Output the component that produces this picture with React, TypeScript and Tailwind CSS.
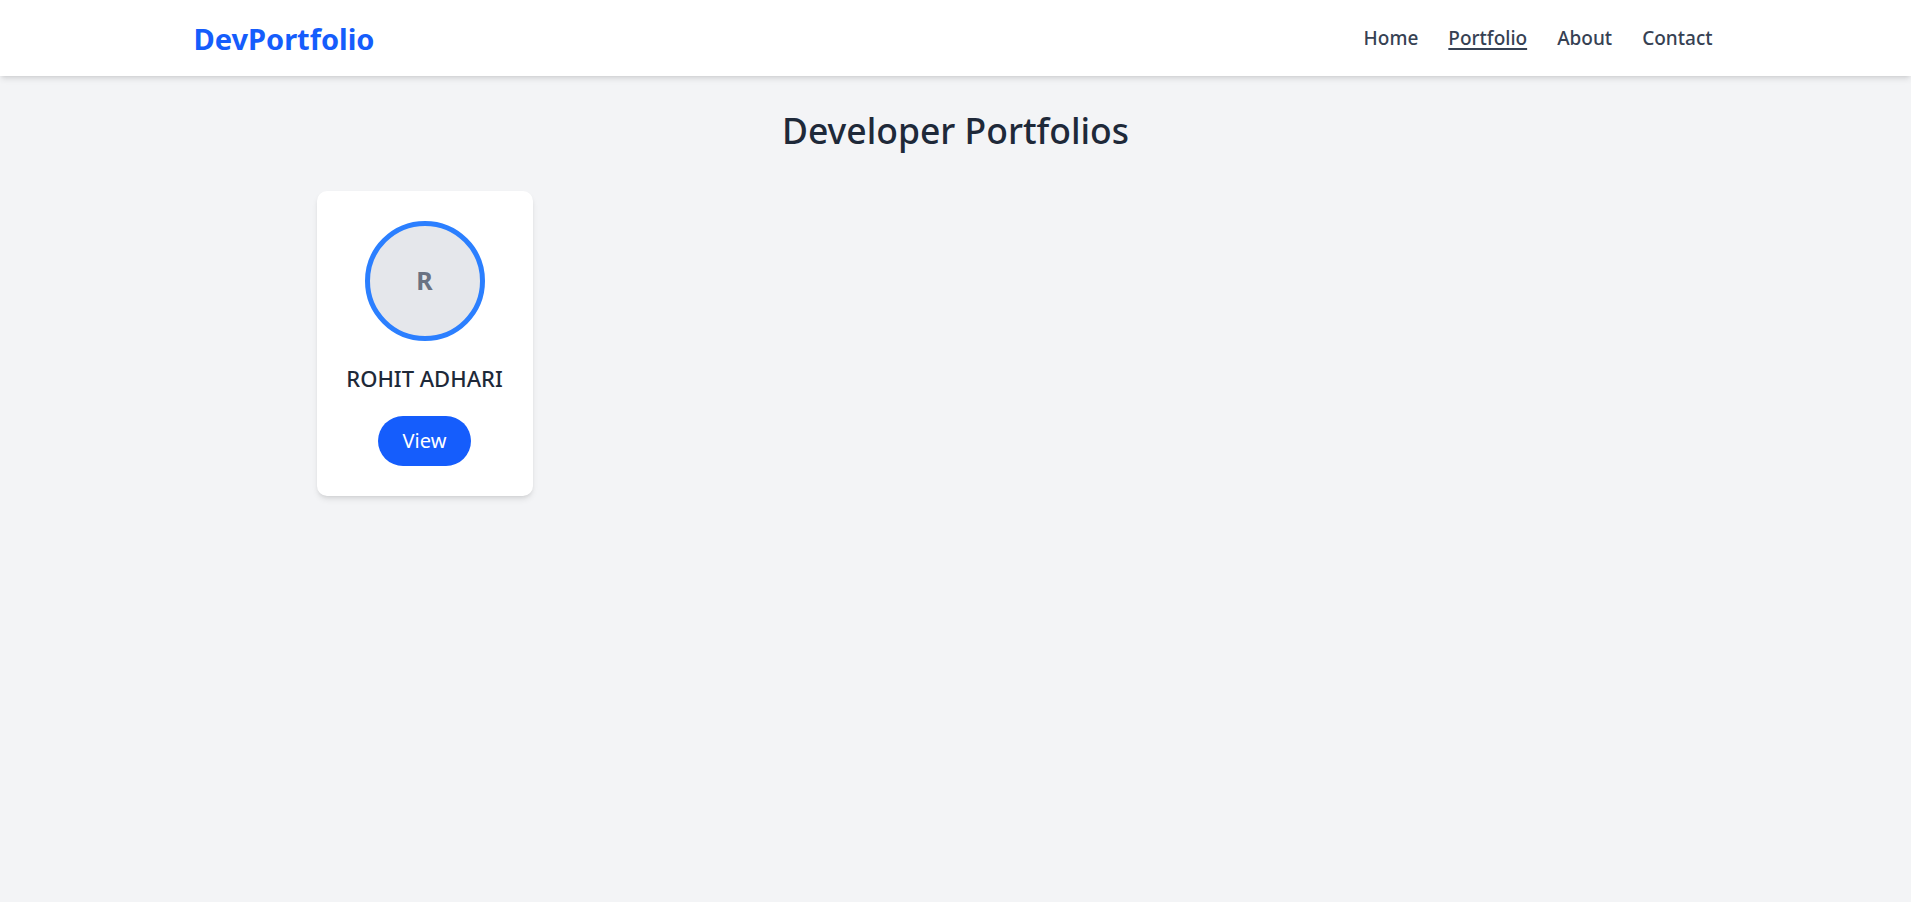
const navItems = ["Home", "Portfolio", "About", "Contact"];

const Header = () => {
  return (
    <header className="bg-white shadow-md relative z-10">
      <div className="max-w-[1600px] mx-auto pl-[38px] pr-[43px] h-[76px] flex items-center justify-between">
        <span className="text-[29px] font-bold text-[#155dfc] leading-none">DevPortfolio</span>
        <nav className="flex items-center gap-[30px]">
          {navItems.map((item) => (
            <a
              key={item}
              href="#"
              className={
                item === "Portfolio"
                  ? "text-[19px] font-medium text-[#364153] underline decoration-[1.5px] underline-offset-[3px]"
                  : "text-[19px] font-medium text-[#364153]"
              }
            >
              {item}
            </a>
          ))}
        </nav>
      </div>
    </header>
  );
};

const PortfolioCard = ({ name }: { name: string }) => {
  return (
    <div className="w-[216px] bg-white rounded-[10px] shadow-md p-[30px] flex flex-col items-center">
      <div className="w-[120px] h-[120px] rounded-full border-[5px] border-[#2b7fff] bg-[#e5e7eb] flex items-center justify-center">
        <span className="text-[25px] font-bold text-[#6a7282]">{name.charAt(0)}</span>
      </div>
      <h3 className="mt-[20px] text-[22px] leading-[35px] font-medium text-[#1e2939] whitespace-nowrap">{name}</h3>
      <button className="mt-[20px] h-[50px] px-[25px] rounded-full bg-[#155dfc] text-white text-[20px]">View</button>
    </div>
  );
};

export default function App() {
  return (
    <div className="min-h-screen bg-[#f3f4f6]" style={{ fontFamily: '"Noto Sans", "Open Sans", sans-serif' }}>
      <Header />
      <main className="max-w-[1278px] mx-auto pt-[32px]">
        <h1 className="text-center text-[35.5px] leading-[45px] font-medium text-[#1e2939]">Developer Portfolios</h1>
        <div className="mt-[38px] flex">
          <PortfolioCard name="ROHIT ADHARI" />
        </div>
      </main>
    </div>
  );
}
